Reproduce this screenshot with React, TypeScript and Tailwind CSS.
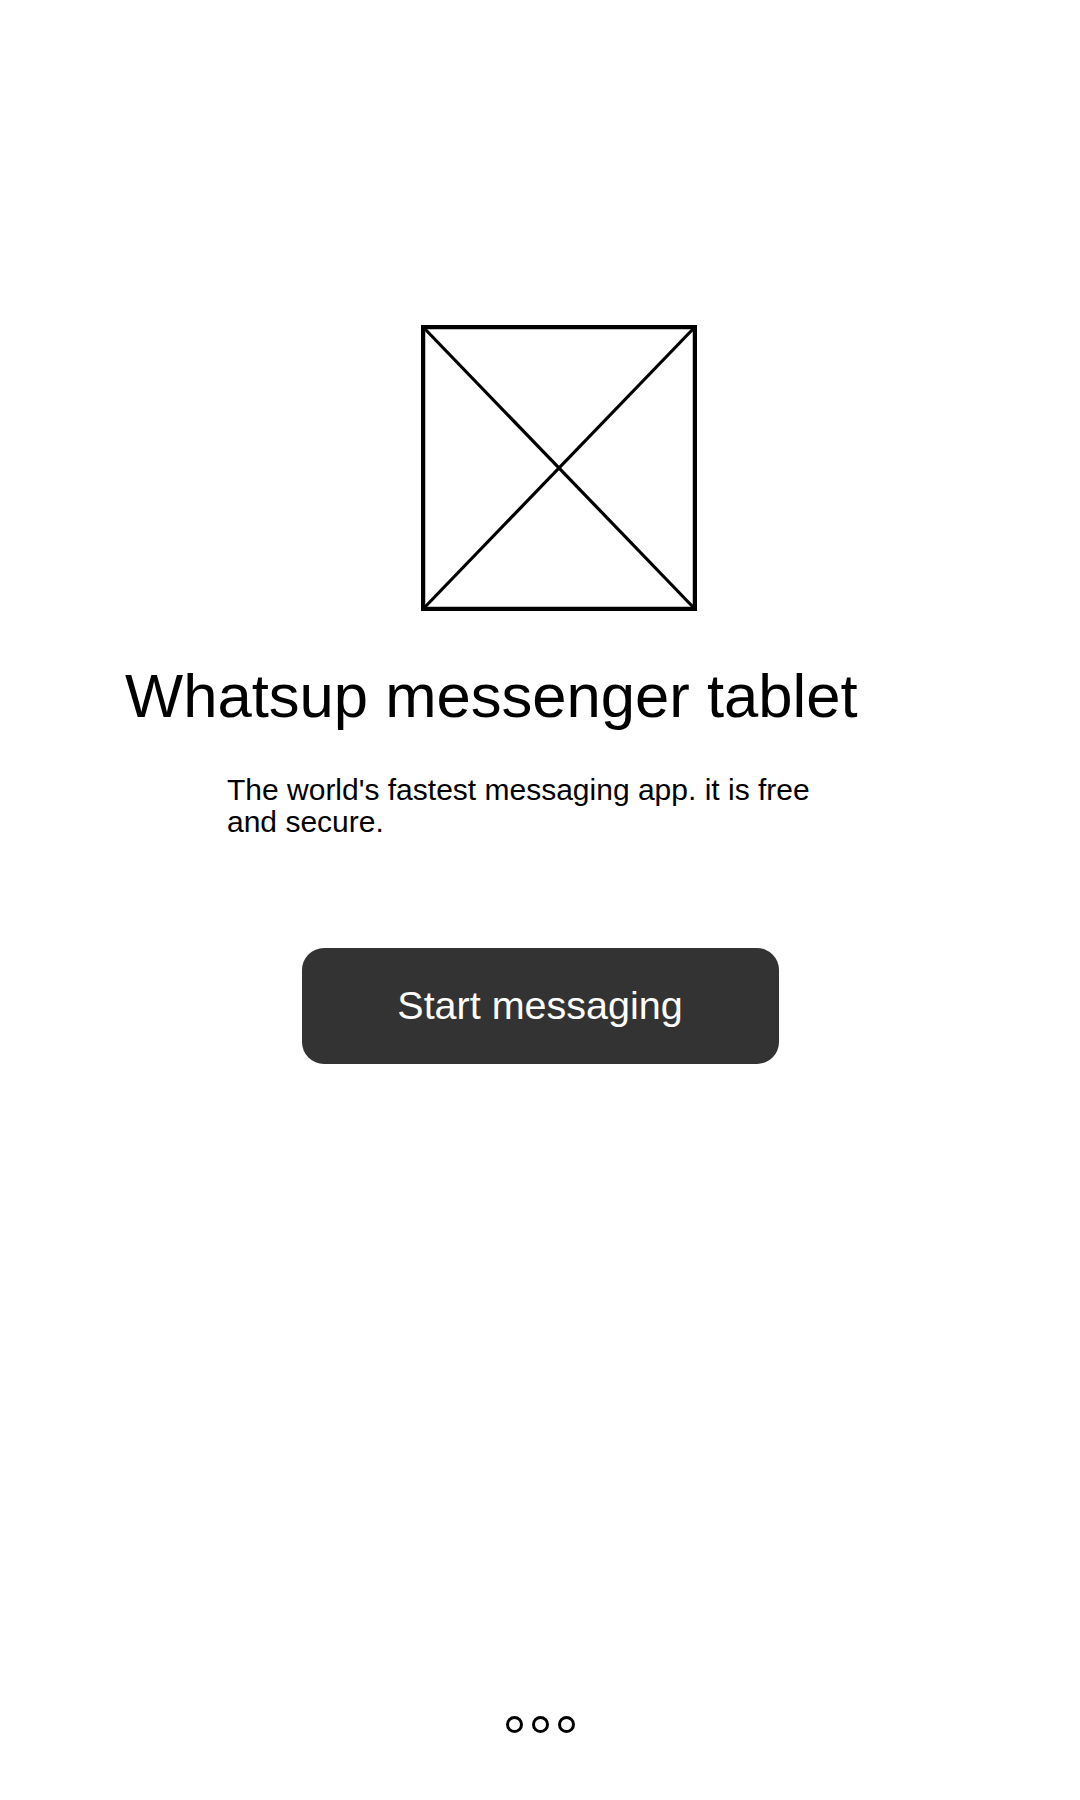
const PlaceholderImage = () => (
  <svg width="276" height="286" viewBox="0 0 276 286" className="block">
    <rect x="2" y="2" width="272" height="282" fill="none" stroke="#000" strokeWidth="4.5" />
    <line x1="3" y1="3" x2="273" y2="283" stroke="#000" strokeWidth="3.2" />
    <line x1="273" y1="3" x2="3" y2="283" stroke="#000" strokeWidth="3.2" />
  </svg>
);

const Dots = ({ count = 3 }: { count?: number }) => (
  <div className="flex items-center justify-center gap-[9px]">
    {Array.from({ length: count }).map((_, i) => (
      <span key={i} className="block w-[17px] h-[17px] rounded-full border-[3px] border-black" />
    ))}
  </div>
);

export default function App() {
  return (
    <div
      className="min-h-[1800px] w-[1080px] bg-white flex flex-col pt-[325px] pb-[67px] text-black"
      style={{ fontFamily: '"Liberation Sans", Arial, sans-serif' }}
    >
      <div className="ml-[421px]">
        <PlaceholderImage />
      </div>

      <h1 className="ml-[125px] mt-[54px] text-[61.6px] leading-[62px] font-normal whitespace-nowrap">
        Whatsup messenger tablet
      </h1>

      <p className="ml-[227px] mt-[47px] w-[610px] text-[30px] leading-[32px]">
        The world's fastest messaging app. it is free and secure.
      </p>

      <button className="self-center mt-[110px] w-[477px] h-[116px] rounded-[22px] bg-[#333333] text-white text-[39.5px] leading-none">
        Start messaging
      </button>

      <div className="mt-auto">
        <Dots />
      </div>
    </div>
  );
}
